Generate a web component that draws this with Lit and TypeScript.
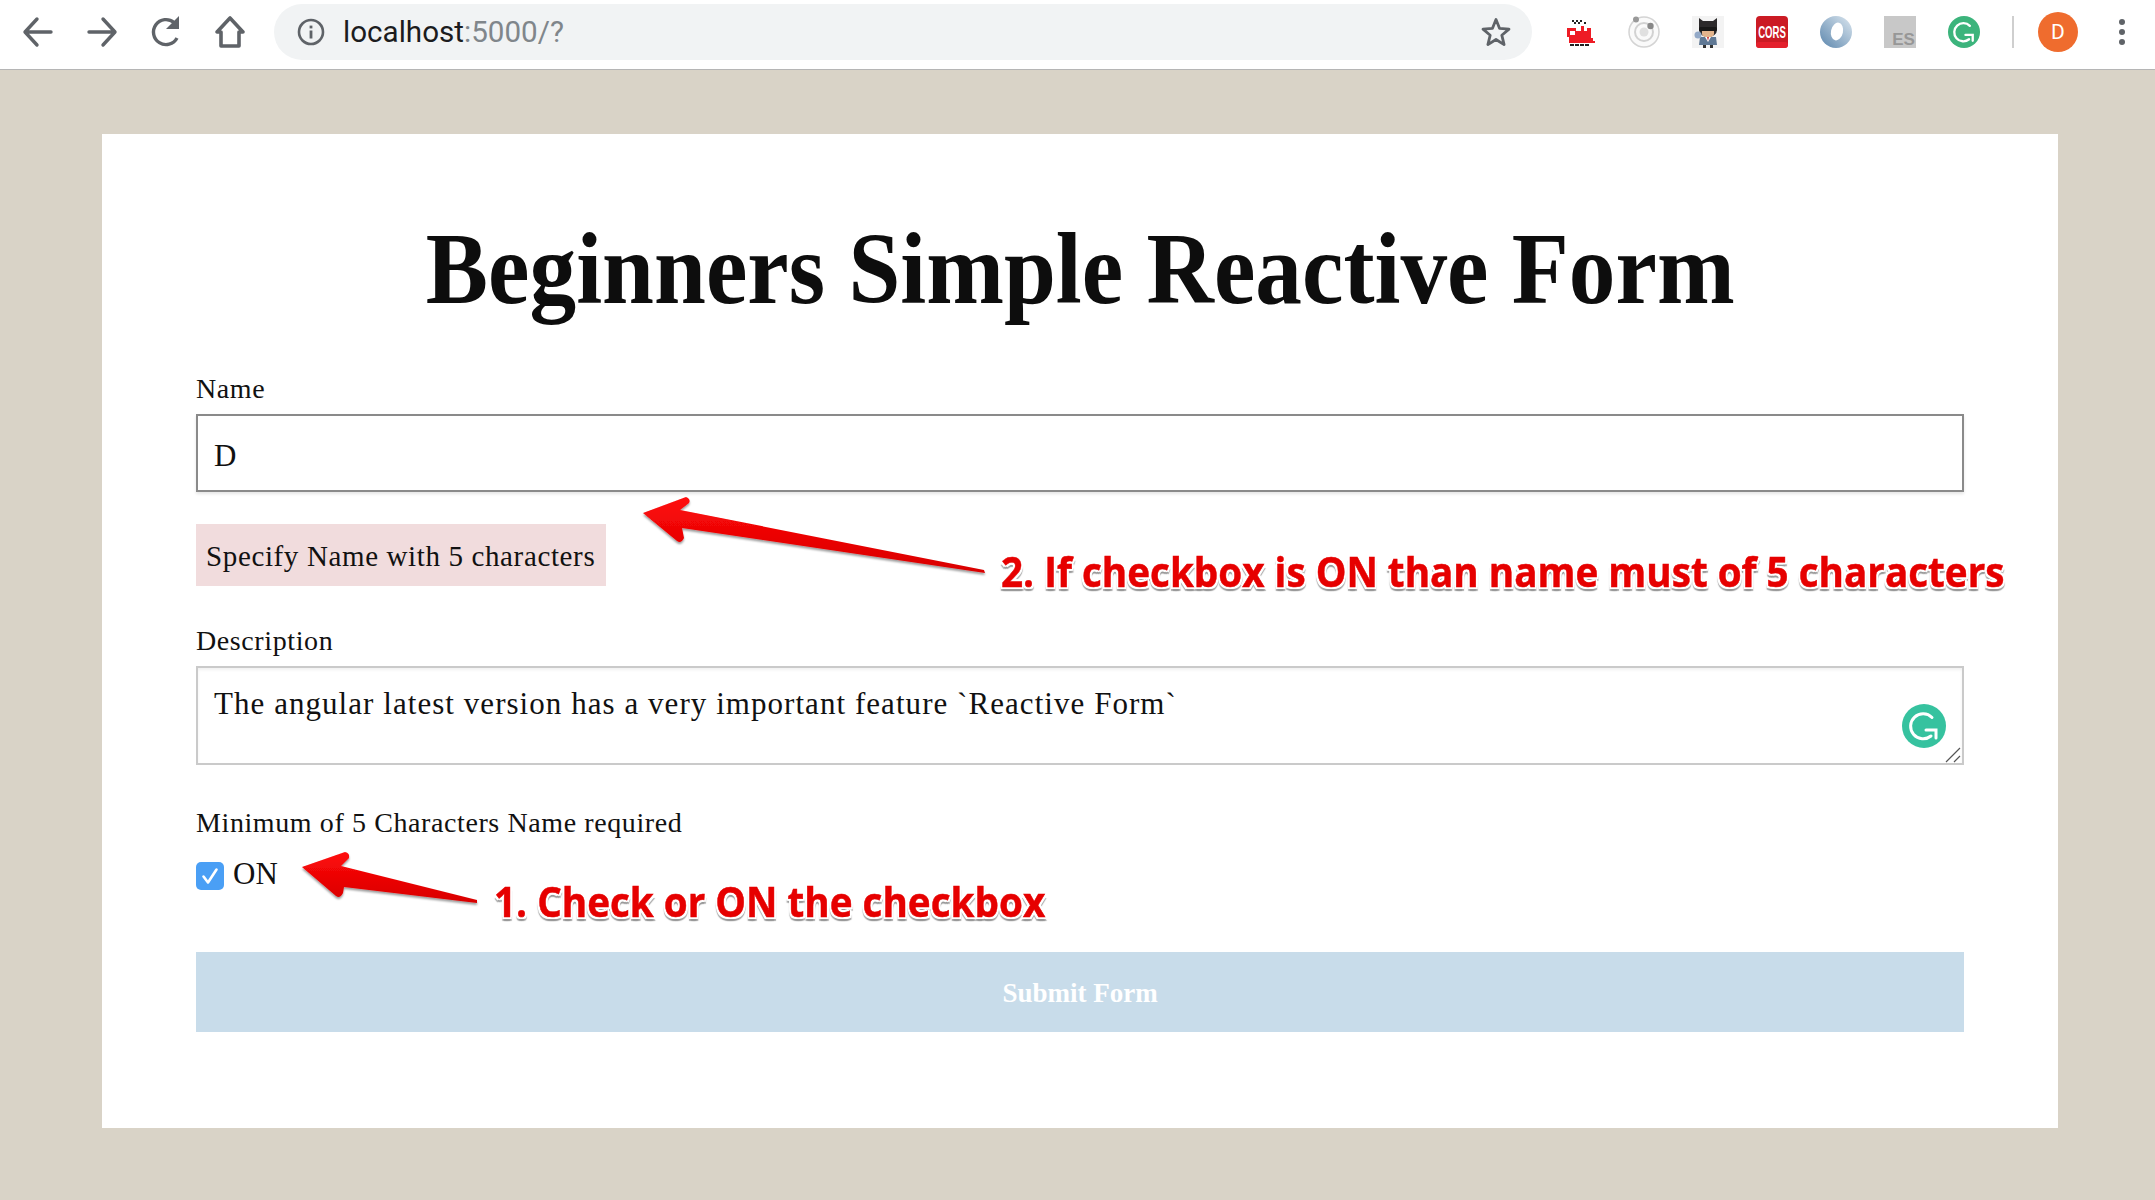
import { LitElement, html, css, svg } from "lit";
import { customElement } from "lit/decorators.js";

const chromeIcons = {
  back: svg`<path d="M19 7 L7 20 L19 33 M8 20 H33" fill="none" stroke="#5f6368" stroke-width="3.4" stroke-linecap="round" stroke-linejoin="round"/>`,
  forward: svg`<path d="M21 7 L33 20 L21 33 M32 20 H7" fill="none" stroke="#5f6368" stroke-width="3.4" stroke-linecap="round" stroke-linejoin="round"/>`,
  reload: svg`<path d="M31 26 A12.5 12.5 0 1 1 28 10.5" fill="none" stroke="#5f6368" stroke-width="3.4"/><path d="M33 4 V17 H20 Z" fill="#5f6368"/>`,
  home: svg`<path d="M20 6 L7 20 H11 V34 H29 V20 H33 Z" fill="none" stroke="#5f6368" stroke-width="3.6" stroke-linejoin="round"/>`,
};

@customElement("app-root")
export class AppRoot extends LitElement {
  static styles = css`
    :host { display: block; position: relative; width: 2155px; height: 1200px; overflow: hidden; background: #d9d3c7; font-family: "Liberation Serif", serif; color: #111; }
    .toolbar { height: 64px; padding-bottom: 5px; background: #fff; border-bottom: 1px solid #b5b5b5; display: flex; align-items: center; box-sizing: content-box; }
    .nav { display: flex; align-items: center; gap: 24px; margin-left: 18px; }
    .nav svg { width: 40px; height: 40px; display: block; }
    .omni { margin-left: 24px; width: 1258px; height: 56px; border-radius: 28px; background: #f1f3f4; display: flex; align-items: center; box-sizing: border-box; padding: 0 20px 0 23px; }
    .omni .info { width: 28px; height: 28px; display: block; }
    .url { margin-left: 18px; padding-top: 2px; font: 29.6px/1 "Roboto", "Liberation Sans", sans-serif; color: #1c1c1e; flex: 1; }
    .url span { color: #80868b; }
    .star { width: 32px; height: 32px; display: block; }
    .ext { margin-left: 32px; display: flex; align-items: center; gap: 32px; }
    .ext svg { width: 32px; height: 32px; display: block; }
    .sep { width: 2px; height: 32px; background: #cfcfcf; margin-left: 32px; }
    .avatar { margin-left: 24px; width: 40px; height: 40px; border-radius: 50%; background: #ef6c2e; color: #fff; font: 21px/40px "Roboto", sans-serif; text-align: center; }
    .dots { margin-left: 41px; display: flex; flex-direction: column; gap: 4px; }
    .dots i { width: 6px; height: 6px; border-radius: 50%; background: #5f6368; display: block; }

    .card { margin: 64px 0 0 102px; width: 1956px; height: 994px; background: #fff; box-sizing: border-box; padding: 0 94px; display: flex; flex-direction: column; }
    h1 { margin: 81px 0 0; height: 108px; font: bold 101px/108px "Liberation Serif", serif; text-align: center; color: #0d0d0d; white-space: nowrap; }
    h1 span { display: inline-block; transform: scaleX(.924); }
    .lab { font-size: 28px; line-height: 32px; letter-spacing: .6px; color: #111; }
    .name-lab { margin-top: 50px; }
    .name { margin-top: 9px; display: block; width: 100%; height: 78px; box-sizing: border-box; border: 2px solid #8a8a8a; padding: 6px 16px 0; font: 31px "Liberation Serif", serif; color: #111; background: #fff; outline: none; border-radius: 0; box-shadow: 0 2px 3px rgba(0,0,0,.1); }
    .err { margin-top: 32px; align-self: flex-start; width: 410px; height: 62px; box-sizing: border-box; background: #f1dcdd; padding: 1px 0 0 10px; font-size: 29px; letter-spacing: .63px; line-height: 62px; color: #111; white-space: nowrap; }
    .desc-lab { margin-top: 39px; }
    .ta-wrap { position: relative; margin-top: 9px; height: 99px; }
    textarea { display: block; width: 100%; height: 99px; box-sizing: border-box; border: 2px solid #cacaca; padding: 17px 16px 0; font: 31px/1.2 "Liberation Serif", serif; letter-spacing: 1.05px; color: #111; background: #fff; outline: none; border-radius: 0; resize: none; box-shadow: inset 0 2px 3px rgba(0,0,0,.06); }
    .gram { position: absolute; right: 18px; top: 38px; width: 44px; height: 44px; display: block; }
    .grip { position: absolute; right: 3px; bottom: 2px; width: 16px; height: 16px; display: block; }
    .min-lab { margin-top: 42px; }
    .check { margin-top: 22px; display: flex; align-items: center; gap: 9px; height: 30px; font-size: 31px; }
    .check span { padding-bottom: 4px; }
    .box { width: 28px; height: 28px; border-radius: 5px; background: #4a9ff5; display: block; }
    button { margin-top: 61px; height: 80px; width: 100%; border: 0; background: #c8dcea; color: #fff; font: bold 27px "Liberation Serif", serif; padding: 2px 0 0; }

    .overlay { position: absolute; left: 0; top: 0; width: 2155px; height: 1200px; pointer-events: none; display: block; }
    .note { position: absolute; white-space: nowrap; font: bold 42px/1 "Open Sans", sans-serif; color: #e60000; -webkit-text-stroke: .5px #e60000; transform: scaleX(.92); transform-origin: 0 0; text-shadow: 2px 0 0 #fff, -2px 0 0 #fff, 0 2px 0 #fff, 0 -2px 0 #fff, 2px 2px 0 #fff, -2px 2px 0 #fff, 2px -2px 0 #fff, -2px -2px 0 #fff, 0 4px 1px #999, 2px 4px 1px #aaa, -2px 4px 1px #aaa; }
    .n1 { left: 494px; top: 880px; }
    .n2 { left: 1001px; top: 550px; }
  `;

  render() {
    return html`
      <div class="toolbar">
        <div class="nav">
          <svg viewBox="0 0 40 40">${chromeIcons.back}</svg>
          <svg viewBox="0 0 40 40">${chromeIcons.forward}</svg>
          <svg viewBox="0 0 40 40">${chromeIcons.reload}</svg>
          <svg viewBox="0 0 40 40">${chromeIcons.home}</svg>
        </div>
        <div class="omni">
          <svg class="info" viewBox="0 0 28 28"><circle cx="14" cy="14" r="12" fill="none" stroke="#5f6368" stroke-width="2.6"/><rect x="12.6" y="12.5" width="2.8" height="8" fill="#5f6368"/><rect x="12.6" y="7.6" width="2.8" height="2.8" fill="#5f6368"/></svg>
          <div class="url">localhost<span>:5000/?</span></div>
          <svg class="star" viewBox="0 0 32 32"><path d="M16 3.5 L19.6 12.4 L29 13.1 L21.8 19.2 L24.1 28.6 L16 23.5 L7.9 28.6 L10.2 19.2 L3 13.1 L12.4 12.4 Z" fill="none" stroke="#5f6368" stroke-width="2.8" stroke-linejoin="round"/></svg>
        </div>
        <div class="ext">
          <svg viewBox="0 0 32 32">
            <path d="M8 4h2v2H8zM12 4h2v2h-2zM16 4h2v2h-2zM10 6h2v2h-2zM14 6h2v2h-2zM20 6h2v2h-2z" fill="#222"/>
            <path d="M3 12h9v3h5v-5h3v5h3v-3h4v10h2v3h2v2H5v-6H3z" fill="#ee1c25"/>
            <rect x="6" y="15" width="5" height="4" fill="#fff"/>
            <path d="M6 28h4v2H6zM11 28h4v2h-4zM16 28h4v2h-4zM21 28h4v2h-4z" fill="#222"/>
          </svg>
          <svg viewBox="0 0 32 32"><circle cx="16" cy="16" r="15" fill="#fafafa" stroke="#d4d4d4" stroke-width="1.5"/><circle cx="16" cy="16" r="9" fill="none" stroke="#d2d2d2" stroke-width="2"/><circle cx="16" cy="16" r="4.5" fill="#e0e0e0"/><circle cx="8" cy="3.500" r="3" fill="#999"/><circle cx="22.500" cy="10" r="3.200" fill="#888"/></svg>
          <svg viewBox="0 0 32 32"><rect width="32" height="32" fill="#f3f3f3"/><path d="M7 2l4 3h10l4-3v12a9 7 0 0 1-18 0z" fill="#2c2a2b"/><rect x="7" y="11" width="18" height="4" rx="1.500" fill="#181818"/><path d="M10 15h12v3a6 3.500 0 0 1-12 0z" fill="#e3b48c"/><path d="M8 21h16l1 8H7z" fill="#5f7894"/><path d="M13 21h6l-3 5z" fill="#fff"/><path d="M15 21h2l-1 4z" fill="#c33"/><circle cx="6" cy="19" r="3.500" fill="#93a9c7"/><path d="M11 29h3v3h-3zM18 29h3v3h-3z" fill="#333"/></svg>
          <svg viewBox="0 0 32 32"><rect width="32" height="32" rx="4" fill="#cb1b24"/><rect y="26" width="32" height="6" rx="3" fill="#e4202c"/><text transform="translate(16 21.500) scale(.8 1.35)" text-anchor="middle" font-family="Liberation Sans, sans-serif" font-weight="700" font-size="12" fill="#fff">CORS</text></svg>
          <svg viewBox="0 0 32 32"><defs><linearGradient id="jg" x1="0" y1="1" x2="1" y2="0"><stop offset="0" stop-color="#5c86ad"/><stop offset="1" stop-color="#dbe6ef"/></linearGradient></defs><circle cx="16" cy="16" r="16" fill="url(#jg)"/><ellipse cx="17" cy="15.500" rx="6" ry="9" transform="rotate(12 17 15.500)" fill="#fff"/></svg>
          <svg viewBox="0 0 32 32"><rect width="32" height="32" fill="#c8c8c8"/><text x="19.500" y="29" text-anchor="middle" font-family="Liberation Sans, sans-serif" font-size="17" font-weight="700" fill="#979797">ES</text></svg>
          <svg viewBox="0 0 44 44"><circle cx="22" cy="22" r="22" fill="#3cb47c"/><path d="M30 13.500A12.500 12.500 0 1 0 29 32M24 26H34V34" fill="none" stroke="#fff" stroke-width="3.200" stroke-linecap="round" stroke-linejoin="miter"/></svg>
        </div>
        <div class="sep"></div>
        <div class="avatar">D</div>
        <div class="dots"><i></i><i></i><i></i></div>
      </div>

      <div class="card">
        <h1><span>Beginners Simple Reactive Form</span></h1>
        <div class="lab name-lab">Name</div>
        <input class="name" .value=${"D"} />
        <div class="err">Specify Name with 5 characters</div>
        <div class="lab desc-lab">Description</div>
        <div class="ta-wrap">
          <textarea .value=${"The angular latest version has a very important feature `Reactive Form`"}></textarea>
          <svg class="gram" viewBox="0 0 44 44"><circle cx="22" cy="22" r="22" fill="#36c29f"/><path d="M30 13.500A12.500 12.500 0 1 0 29 32M24 26H34V34" fill="none" stroke="#fff" stroke-width="3" stroke-linecap="round" stroke-linejoin="miter"/></svg>
          <svg class="grip" viewBox="0 0 16 16"><path d="M1 15 L15 1 M9 15 L15 9" fill="none" stroke="#555" stroke-width="1.200"/></svg>
        </div>
        <div class="lab min-lab">Minimum of 5 Characters Name required</div>
        <div class="check">
          <svg class="box" viewBox="0 0 28 28"><path d="M7.500 14.500 L12 20.500 L20.500 7.500" fill="none" stroke="#fff" stroke-width="2.600" stroke-linecap="round" stroke-linejoin="round"/></svg>
          <span>ON</span>
        </div>
        <button>Submit Form</button>
      </div>

      <svg class="overlay" viewBox="0 0 2155 1200">
        <defs>
          <linearGradient id="ag" x1="0" y1="0" x2="0" y2="1"><stop offset="0" stop-color="#ff0a0a"/><stop offset="1" stop-color="#d80000"/></linearGradient>
          <filter id="as" x="-5%" y="-20%" width="110%" height="150%"><feDropShadow dx="0" dy="2" stdDeviation="1" flood-color="#000" flood-opacity=".4"/></filter>
        </defs>
        <path d="M643 513 L686 497 Q691 499 689 503 L680 510 L984 570 L985 573 L682 528 L684 538 Q681 544 677 541 Z" fill="url(#ag)" filter="url(#as)"/>
        <path d="M302 867 L345 852 Q350 853 349 858 L341 866 L477 900 L477 903 L344 887 L343 893 Q340 899 336 896 Z" fill="url(#ag)" filter="url(#as)"/>
      </svg>
      <div class="note n1">1. Check or ON the checkbox</div>
      <div class="note n2">2. If checkbox is ON than name must of 5 characters</div>
    `;
  }
}
